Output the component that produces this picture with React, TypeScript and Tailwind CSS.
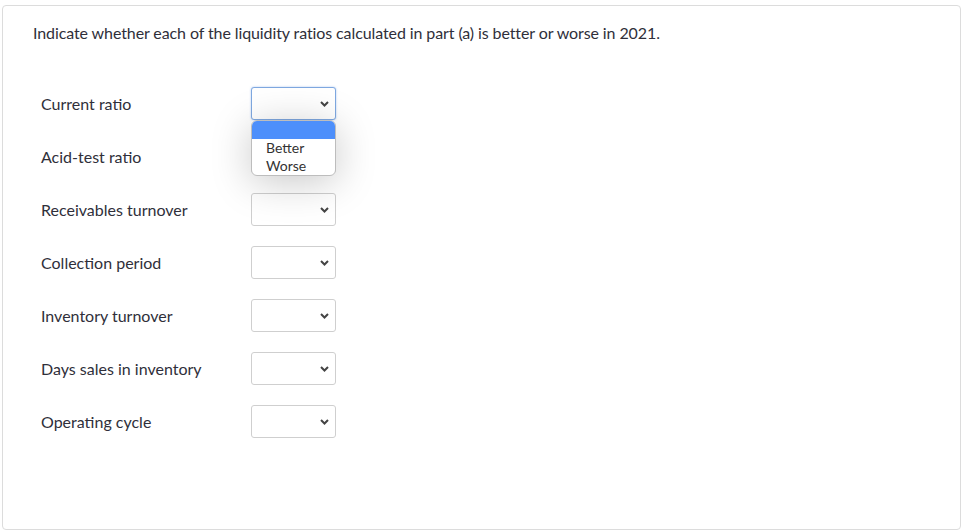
import React from 'react';

const rows = [
  'Current ratio',
  'Acid-test ratio',
  'Receivables turnover',
  'Collection period',
  'Inventory turnover',
  'Days sales in inventory',
  'Operating cycle'
];

const Chevron = () => <svg width="9" height="6" viewBox="0 0 9 6" className="absolute right-[6px] top-[13px]">
    <path d="M1 1 L4.5 4.5 L8 1" fill="none" stroke="#444" strokeWidth="2" />
  </svg>;

const FakeSelect: React.FC<{ focused?: boolean }> = ({ focused }) => {
  return <div className={`relative w-[85px] h-[33px] rounded-[3px] bg-white border ${focused ? 'border-[#7fa8e0] shadow-[0_0_2px_rgba(80,140,230,0.5)]' : 'border-[#cfcfcf]'}`}>
      <Chevron />
    </div>;
};

export default function App() {
  return <div className="w-[962px] h-[531px] bg-white pt-[5px] pl-[2px]" style={{ fontFamily: 'Lato, "Open Sans", sans-serif' }}>
      <div className="w-[959px] h-[525px] border border-[#dcdcdc] rounded-[4px] text-[#2f2f3a]">
        <p className="pl-[30px] pt-[17px] text-[16px] leading-[20px] tracking-[-0.1px]">
          Indicate whether each of the liquidity ratios calculated in part (a) is better or worse in 2021.
        </p>
        <div className="mt-[44px] pl-[38px] flex flex-col gap-[20px]">
          {rows.map((label, i) => <div key={label} className="relative flex items-center h-[33px]">
              <span className="w-[210px] text-[16px] pt-[1px]">{label}</span>
              <FakeSelect focused={i === 0} />
              {i === 0 && <div className="absolute left-[210px] top-[33px] w-[85px] z-10 bg-white rounded-[6px] border border-[#bdbdbd] overflow-hidden shadow-[0_6px_40px_rgba(0,0,0,0.22)]">
                  <div className="h-[18px] bg-[#4d8ffb]"></div>
                  <div className="pl-[14px] text-[14px] leading-[18px] text-[#333]">Better</div>
                  <div className="pl-[14px] text-[14px] leading-[18px] text-[#333]">Worse</div>
                </div>}
            </div>)}
        </div>
      </div>
    </div>;
}
